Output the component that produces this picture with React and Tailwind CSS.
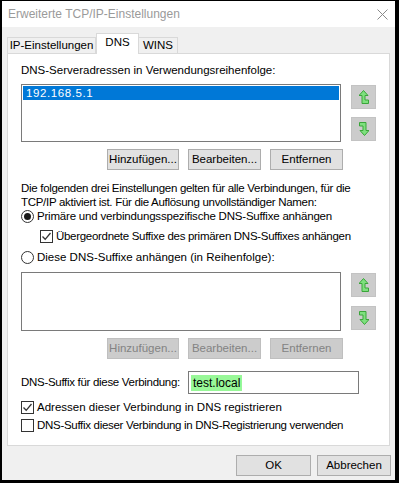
import React from "react";

function UpArrow() {
  return (
    <svg width="10" height="14" viewBox="0 0 10 14">
      <path d="M4.5 0.5 L9 5.5 L6 5.5 L6 10 L9.5 10 L9.5 13.5 L3 13.5 L3 5.5 L0 5.5 Z" fill="#7ee07e" stroke="#3aa53a" strokeWidth="1" />
    </svg>
  );
}

function DownArrow() {
  return (
    <svg width="10" height="14" viewBox="0 0 10 14">
      <path d="M0.5 0.5 L7 0.5 L7 8.5 L10 8.5 L5.5 13.5 L1 8.5 L4 8.5 L4 4 L0.5 4 Z" fill="#7ee07e" stroke="#3aa53a" strokeWidth="1" />
    </svg>
  );
}

function ArrowButton({ children }) {
  return (
    <div className="flex h-[24px] w-[25px] items-center justify-center border border-[#c3c3c3] bg-[#cccccc]">
      {children}
    </div>
  );
}

function Btn({ children, disabled, className = "" }) {
  return (
    <div
      className={
        "flex h-[21px] items-center justify-center whitespace-nowrap border " +
        (disabled ? "border-[#bfbfbf] bg-[#cccccc] text-[#838383] " : "border-[#adadad] bg-[#e1e1e1] text-black ") +
        className
      }
    >
      {children}
    </div>
  );
}

function Radio({ checked }) {
  return (
    <div className="flex h-[13px] w-[13px] shrink-0 items-center justify-center rounded-full border border-[#333333] bg-white">
      {checked && <div className="h-[7px] w-[7px] rounded-full bg-[#1a1a1a]" />}
    </div>
  );
}

function Check({ checked }) {
  return (
    <div className="flex h-[13px] w-[13px] shrink-0 items-center justify-center border border-[#333333] bg-white">
      {checked && (
        <svg width="11" height="11" viewBox="0 0 11 11">
          <path d="M1.5 5.5 L4.2 8.3 L9.5 2" fill="none" stroke="#333333" strokeWidth="1.3" />
        </svg>
      )}
    </div>
  );
}

export default function App() {
  return (
    <div className="h-[483px] w-[399px] overflow-hidden whitespace-nowrap border-b-[3px] border-l-2 border-r-4 border-t border-black font-['Liberation_Sans',sans-serif] text-[11.5px] leading-[15px] text-black">
      <div className="flex h-full flex-col bg-[#f0f0f0]">
        {/* title bar */}
        <div className="flex h-[26px] shrink-0 items-center justify-between bg-white pl-[6px] pr-[7px]">
          <span className="text-[12px] text-[#9a9a9a]">Erweiterte TCP/IP-Einstellungen</span>
          <svg width="11" height="11" viewBox="0 0 11 11">
            <path d="M0.5 0.5 L10.5 10.5 M10.5 0.5 L0.5 10.5" stroke="#8a8a8a" strokeWidth="1" />
          </svg>
        </div>

        {/* tabs */}
        <div className="relative z-10 mt-[6px] flex h-[20px] shrink-0 items-end pl-[5px]">
          <div className="flex h-[16px] w-[89px] items-center justify-center border border-b-0 border-[#d9d9d9] bg-[#f0f0f0]">
            IP-Einstellungen
          </div>
          <div className="-mb-px flex h-[21px] w-[43px] items-center justify-center border border-b-0 border-[#d9d9d9] bg-white pb-[3px]">
            DNS
          </div>
          <div className="flex h-[16px] w-[39px] items-center justify-center border border-b-0 border-l-0 border-[#d9d9d9] bg-[#f0f0f0]">
            WINS
          </div>
        </div>

        {/* panel */}
        <div className="mx-[5px] flex h-[393px] shrink-0 flex-col border border-[#d9d9d9] bg-white pl-[13px] pr-[13px] pt-[9px]">
          <div>DNS-Serveradressen in Verwendungsreihenfolge:</div>
          <div className="mt-[6px] flex gap-[10px]">
            <div className="h-[58px] w-[322px] border border-[#7a7a7a] p-px">
              <div className="flex h-[14px] items-center bg-[#0078d7] pl-[3px] tracking-[0.6px] text-white">192.168.5.1</div>
            </div>
            <div className="flex flex-col gap-[8px] pt-px">
              <ArrowButton><UpArrow /></ArrowButton>
              <ArrowButton><DownArrow /></ArrowButton>
            </div>
          </div>
          <div className="mt-[7px] flex gap-[9px] pl-[86px]">
            <Btn className="w-[72px]">Hinzufügen...</Btn>
            <Btn className="w-[73px]">Bearbeiten...</Btn>
            <Btn className="w-[73px]">Entfernen</Btn>
          </div>

          <div className="mt-[11px] leading-[14px] tracking-[-0.3px]">
            <div>Die folgenden drei Einstellungen gelten für alle Verbindungen, für die</div>
            <div>TCP/IP aktiviert ist. Für die Auflösung unvollständiger Namen:</div>
          </div>
          <div className="flex h-[14px] items-center gap-[3px]">
            <Radio checked />
            <span className="tracking-[-0.2px]">Primäre und verbindungsspezifische DNS-Suffixe anhängen</span>
          </div>
          <div className="mt-[5px] flex h-[16px] items-center gap-[3px] pl-[19px]">
            <Check checked />
            <span className="tracking-[-0.3px]">Übergeordnete Suffixe des primären DNS-Suffixes anhängen</span>
          </div>
          <div className="mt-[5px] flex h-[16px] items-center gap-[3px]">
            <Radio />
            <span>Diese DNS-Suffixe anhängen (in Reihenfolge):</span>
          </div>

          <div className="mt-[7px] flex gap-[10px]">
            <div className="h-[59px] w-[322px] border border-[#7a7a7a]" />
            <div className="flex flex-col gap-[9px] pt-px">
              <ArrowButton><UpArrow /></ArrowButton>
              <ArrowButton><DownArrow /></ArrowButton>
            </div>
          </div>
          <div className="mt-[7px] flex gap-[9px] pl-[86px]">
            <Btn disabled className="w-[72px]">Hinzufügen...</Btn>
            <Btn disabled className="w-[73px]">Bearbeiten...</Btn>
            <Btn disabled className="w-[73px]">Entfernen</Btn>
          </div>

          <div className="mt-[12px] flex items-center">
            <span className="w-[167px] tracking-[-0.3px]">DNS-Suffix für diese Verbindung:</span>
            <div className="flex h-[23px] w-[171px] items-center border border-[#7a7a7a] pl-[2px]">
              <span className="bg-[#98f898] px-[2px] text-[12px] leading-[16px]">test.local</span>
            </div>
          </div>
          <div className="mt-[5px] flex h-[16px] items-center gap-[3px]">
            <Check checked />
            <span>Adressen dieser Verbindung in DNS registrieren</span>
          </div>
          <div className="mt-[2px] flex h-[16px] items-center gap-[3px]">
            <Check />
            <span className="tracking-[-0.3px]">DNS-Suffix dieser Verbindung in DNS-Registrierung verwenden</span>
          </div>
        </div>

        {/* footer */}
        <div className="mt-[9px] flex justify-end gap-[6px] pr-[4px]">
          <Btn className="w-[75px]">OK</Btn>
          <Btn className="w-[74px]">Abbrechen</Btn>
        </div>
      </div>
    </div>
  );
}
